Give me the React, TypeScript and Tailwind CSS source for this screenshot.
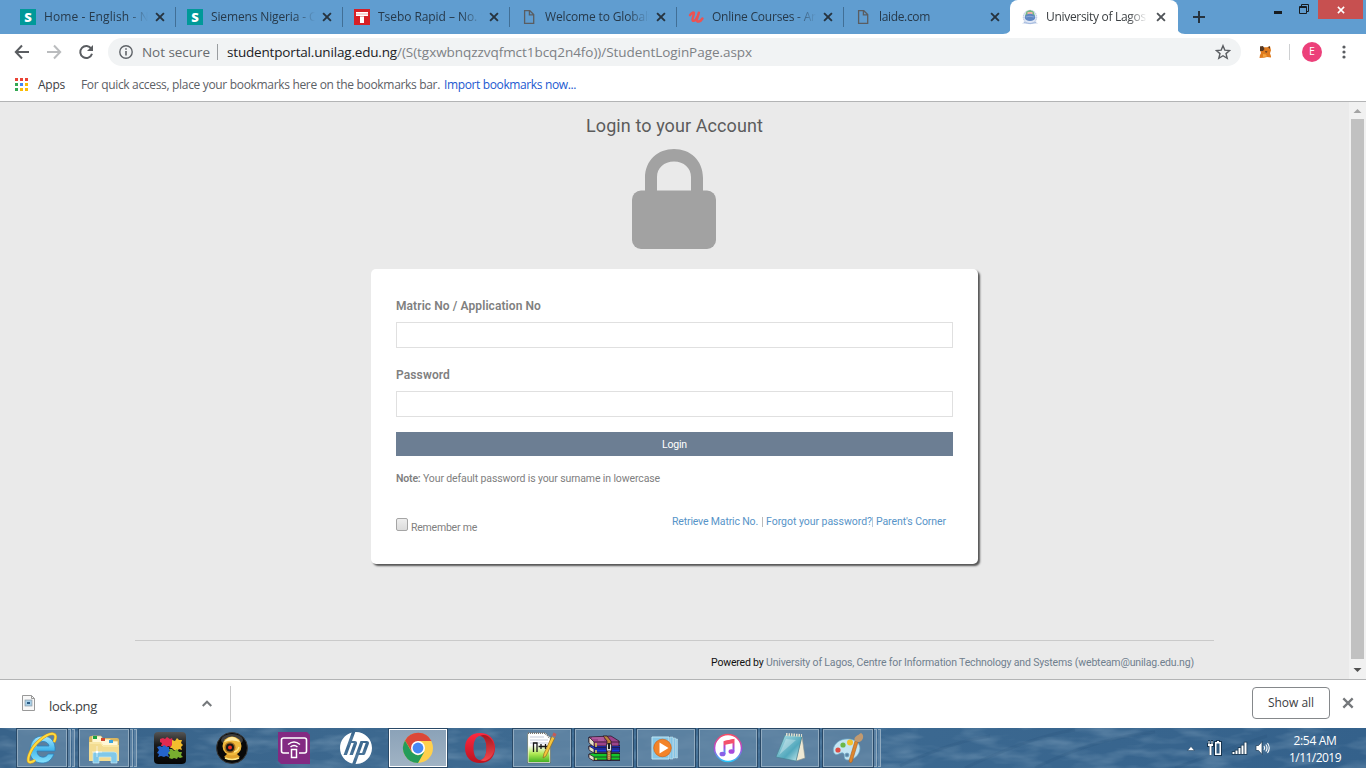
import { useLayoutEffect, useRef, useState } from "react";
import type { ReactNode } from "react";
import { SiHp } from "react-icons/si";

/* Text run whose tracking is adjusted so that it fills the given width. */
function Fit({ w, className = "", children }: { w: number; className?: string; children: string }) {
  const ref = useRef<HTMLSpanElement>(null);
  const [ls, setLs] = useState(0);
  useLayoutEffect(() => {
    if (ref.current) {
      const natural = ref.current.getBoundingClientRect().width;
      setLs((w - natural) / children.length);
    }
  }, []);
  return (
    <span ref={ref} className={`inline-block shrink-0 whitespace-pre ${className}`} style={{ letterSpacing: `${ls}px` }}>
      {children}
    </span>
  );
}

const Close = ({ className = "" }: { className?: string }) => (
  <svg viewBox="0 0 10 10" className={className} fill="none" stroke="currentColor" strokeWidth="1.9">
    <path d="M1.1 1.1 8.9 8.9M8.9 1.1 1.1 8.9" />
  </svg>
);

const Siemens = () => (
  <svg viewBox="0 0 16 16" className="h-4 w-4 overflow-visible">
    <rect width="16" height="16" fill="#009999" />
    <text x="8" y="12.7" textAnchor="middle" fontFamily="Open Sans, sans-serif" fontWeight="800" fontSize="13" fill="#fff">S</text>
  </svg>
);
const Tsebo = () => (
  <svg viewBox="0 0 16 16" className="h-4 w-4">
    <rect width="16" height="16" fill="#d71f26" />
    <path d="M2 3h12v4H10v7H6V7H2z" fill="#fff" />
    <path d="M2 5h12M6 7.5h4" stroke="#e98080" strokeWidth=".7" />
  </svg>
);
const Page = () => (
  <svg viewBox="0 0 16 16" className="h-4 w-4" fill="none" stroke="#5a5d61" strokeWidth="1.3">
    <path d="M3.6 1.7h5.200l3.900 3.800v8.800H3.600zM8.400 1.800v4h4" />
  </svg>
);
const Udemy = () => (
  <svg viewBox="0 0 16 16" className="h-4 w-4" fill="none" stroke="#ec5252" strokeLinecap="round" strokeLinejoin="round">
    <path d="M2 6.2C3.5 3.5 6.500 2.600 6 4.400L4.500 10c-.5 3 2.800 2.500 4.600-1.800" strokeWidth="2.4" />
    <path d="m10.800 3.800-2 6.700c-.3 3.500 3.700 2.200 5.600-1" strokeWidth="2.500" />
  </svg>
);
const Crest = () => (
  <svg viewBox="0 0 16 16" className="h-4 w-4">
    <path d="M4 2h8l3 6-1 4 2 3H0l2-3-1-4z" fill="#e3e9f4" />
    <circle cx="8" cy="8" r="6.700" fill="#dfe7f5" stroke="#b7c5e2" strokeWidth="1" strokeDasharray="1.5 .7" />
    <path d="M3 7 4.500 2.500 8 1l3.500 1.500L13 7z" fill="#71b980" />
    <path d="M5.500 3h5v3.500h-5z" fill="#f2b3a6" />
    <ellipse cx="8" cy="8.400" rx="5.200" ry="3.600" fill="#5f87c3" />
    <path d="M4 8q4-1.500 8 0" stroke="#8baad8" fill="none" /><path d="M2 13.500q6 2 12 0" stroke="#a4bbe0" fill="none" />
  </svg>
);

const tabs = [
  { icon: <Siemens />, title: "Home - English - Ni", w: 108 },
  { icon: <Siemens />, title: "Siemens Nigeria - Ce", w: 112 },
  { icon: <Tsebo />, title: "Tsebo Rapid – No. 1", w: 109 },
  { icon: <Page />, title: "Welcome to Globalt", w: 107 },
  { icon: <Udemy />, title: "Online Courses - Any", w: 112 },
  { icon: <Page />, title: "laide.com", w: 51 },
];

const UI = "[font-family:'Open_Sans','Noto_Sans',sans-serif]";

function TabStrip() {
  return (
    <div className="flex h-[34px] bg-[#609dd0] pl-[9px]">
      {tabs.map((t, i) => (
        <div key={t.title} className="relative flex h-[34px] w-[167px] shrink-0 items-center pl-[11px]">
          <span className="w-6">{t.icon}</span>
          <div className="h-5 w-[104px] overflow-hidden text-[12px] leading-5 text-[#26394a] [mask-image:linear-gradient(to_right,#000_80%,transparent)]">
            <Fit w={t.w}>{t.title}</Fit>
          </div>
          <Close className="ml-[7px] h-[10px] w-[10px] text-[#26333f]" />
          {i < 5 && <i className="absolute top-[7px] right-0 h-5 w-px bg-[#416f96]" />}
        </div>
      ))}
      <div className="-ml-2 flex h-[34px] shrink-0">
        <svg viewBox="0 0 8 34" className="h-[34px] w-2"><path d="M8 26q0 8-8 8h8z" fill="#fff" /></svg>
        <div className="ml-[-1px] flex h-[34px] w-[168px] items-center rounded-t-[8px] bg-white pl-3">
          <span className="w-6"><Crest /></span>
          <div className="h-5 w-[101px] overflow-hidden text-[12px] leading-5 text-[#3c4043] [mask-image:linear-gradient(to_right,#000_82%,transparent)]">
            <Fit w={109}>University of Lagos S</Fit>
          </div>
          <Close className="ml-[9px] h-[10px] w-[10px] text-[#505458]" />
        </div>
        <svg viewBox="0 0 8 34" className="-ml-px h-[34px] w-2"><path d="M0 26q0 8 8 8H0z" fill="#fff" /></svg>
      </div>
      <svg viewBox="0 0 12 12" className="mt-[11px] ml-[8px] h-3 w-3" stroke="#26333f" strokeWidth="2"><path d="M6 0v12M0 6h12" /></svg>
      <div className="ml-auto flex items-start">
        <svg viewBox="0 0 8 3" className="mt-[11px] mr-[17px] h-[3px] w-2"><path d="M0 0h8v3H0z" fill="#171c21" /></svg>
        <svg viewBox="0 0 10 10" className="mt-1 mr-[9px] h-[10px] w-[10px]" fill="none" stroke="#171c21">
          <path d="M.5 2.5h7v7h-7zM2.5 2V.5h7v7H8M1 3.500h6" />
        </svg>
        <div className="mr-[3px] flex h-[19px] w-[45px] items-center justify-center bg-[#c75050] text-white">
          <Close className="h-2 w-2" />
        </div>
      </div>
    </div>
  );
}

function Toolbar() {
  return (
    <div className="flex h-9 items-center bg-white">
      <svg viewBox="0 0 16 16" className="ml-[14px] h-4 w-4" fill="none" stroke="#5a5d61" strokeWidth="2"><path d="M15 8H2M8 1.5 1.8 8 8 14.5" /></svg>
      <svg viewBox="0 0 16 16" className="ml-4 h-4 w-4" fill="none" stroke="#babcbe" strokeWidth="2"><path d="M1 8h13M8 1.5 14.2 8 8 14.5" /></svg>
      <svg viewBox="0 0 16 16" className="ml-4 h-4 w-4"><path d="M13.3 4.8A6 6 0 1 0 14 9.8" fill="none" stroke="#5a5d61" strokeWidth="2" /><path d="M15 1v6H9z" fill="#5a5d61" /></svg>
      <div className="ml-[14px] flex h-7 w-[1133px] items-center rounded-full bg-[#f1f3f4] pl-[11px] text-[14px] leading-7">
        <svg viewBox="0 0 14 14" className="h-[14px] w-[14px]" fill="none" stroke="#5f6368" strokeWidth="1.4"><circle cx="7" cy="7" r="6.2" /><path d="M7 6v4.5M7 3.3v1.5" strokeWidth="1.6" /></svg>
        <Fit w={68} className="ml-[9px] text-[13.5px] text-[#686b6f]">Not secure</Fit>
        <i className="ml-[7px] h-4 w-px bg-[#9a9da0]" />
        <Fit w={170} className="ml-[9px] text-[13.5px] text-[#202124]">studentportal.unilag.edu.ng</Fit>
        <Fit w={355} className="text-[13.5px] text-[#7d8185]">/(S(tgxwbnqzzvqfmct1bcq2n4fo))/StudentLoginPage.aspx</Fit>
        <svg viewBox="0 0 16 16" className="mr-[10px] ml-auto h-4 w-4" fill="none" stroke="#5a5d61" strokeWidth="1.4"><path d="m8 1.7 1.8 4.4 4.9.4-3.7 3.1 1.2 4.7L8 11.7l-4.2 2.6L5 9.6 1.3 6.5l4.9-.4z" /></svg>
      </div>
      <svg viewBox="0 0 14 14" className="ml-[17px] h-[14px] w-[14px]">
        <path d="m2 1.500 4 .8h3l3-1 1 4-1 3 1 3v1.200l-4-.5-3 .7-4.500.2L2 10l1-2-1-3z" fill="#df7b1e" />
        <path d="m2 1.500 3-.5L6.500 4 5 6 2 6zM10 2l2-.8L12 4zM7 6l2.500.5L8 8z" fill="#543925" />
        <path d="m5 9 3 .5 1 2-4 .6z" fill="#f6a43c" />
      </svg>
      <i className="ml-[17px] h-4 w-px bg-[#ced0d2]" />
      <span className="ml-[12px] flex h-5 w-5 items-center justify-center rounded-full bg-[#ec407a] text-[10.5px] text-white">E</span>
      <svg viewBox="0 0 4 16" className="ml-[20px] h-4 w-1" fill="#5a5d61"><circle cx="2" cy="3" r="1.6" /><circle cx="2" cy="8" r="1.6" /><circle cx="2" cy="13" r="1.6" /></svg>
    </div>
  );
}

const dots = ["#ea4335", "#ea4335", "#ea4335", "#34a853", "#4285f4", "#fbbc05", "#34a853", "#fbbc05", "#fbbc05"];

function BookmarksBar() {
  return (
    <div className="flex h-[32px] items-center border-b border-[#b3b4b5] bg-white pb-[3px] text-[12px] leading-5 text-[#3c4043]">
      <svg viewBox="0 0 13 13" className="ml-[15px] h-[13px] w-[13px]">
        {dots.map((c, i) => <rect key={i} x={(i % 3) * 5} y={Math.floor(i / 3) * 5} width="3" height="3" fill={c} />)}
      </svg>
      <Fit w={27} className="mt-px ml-[10px]">Apps</Fit>
      <Fit w={359} className="mt-px ml-[16px] text-[#5c6065]">For quick access, place your bookmarks here on the bookmarks bar.</Fit>
      <Fit w={132} className="mt-px ml-[4px] text-[#2259d0]">Import bookmarks now...</Fit>
    </div>
  );
}

function LoginPage() {
  return (
    <div className="flex h-[577px] bg-[#eaeaea] [font-family:Roboto,'Open_Sans',sans-serif]">
      <div className="flex w-[1349px] flex-col items-center">
        <Fit w={177} className="mt-[12px] text-[18px] leading-6 text-[#5c5c5c]">Login to your Account</Fit>
        <svg viewBox="0 0 84 100" className="mt-[11px] mr-[1px] h-[100px] w-[84px]" fill="#a2a2a2">
          <path fillRule="evenodd" d="M13 44V29C13 11 26 0 42 0s29 11 29 29v15zM25 42h34V28c0-9-7-15.500-17-15.500S25 19 25 28z" />
          <rect y="41.500" width="84" height="58.500" rx="9" />
        </svg>
        <div className="mt-5 flex h-[295px] w-[607px] flex-col rounded-[5px] bg-white px-[25px] text-[10.500px] text-[#808080] shadow-[2px_2px_2px_#555]">
          <label className="mt-[28px] h-[19px] text-[12px] leading-[19px] font-semibold"><Fit w={145}>Matric No / Application No</Fit></label>
          <input className="mt-[6px] h-[26px] w-[557px] border border-[#e0e0e0] bg-white" />
          <label className="mt-[18px] h-[19px] text-[12px] leading-[19px] font-semibold"><Fit w={54}>Password</Fit></label>
          <input type="password" className="mt-[6px] h-[26px] w-[557px] border border-[#e0e0e0] bg-white" />
          <button className="mt-[15px] h-6 w-[557px] bg-[#6c7e93] pt-px leading-[23px] text-white"><Fit w={25}>Login</Fit></button>
          <div className="mt-[14px] flex h-[17px] leading-[17px]">
            <Fit w={27} className="font-semibold">Note: </Fit>
            <Fit w={237}>Your default password is your surname in lowercase</Fit>
          </div>
          <div className="mt-[26px] flex h-[24px] leading-[17px]">
            <span className="mt-[5px] h-[13px] w-[12px] rounded-[2px] border border-[#a5a5a5] bg-linear-to-b from-[#eee] to-[#dcdcdc]" />
            <Fit w={66} className="mt-[6px] ml-[3px]">Remember me</Fit>
            <div className="mr-[7px] ml-auto flex text-[#5794c8]">
              <Fit w={86}>Retrieve Matric No.</Fit>
              <i className="mr-[2px] ml-[4px] mt-[4px] h-[10px] w-px bg-[#bbb]" />
              <Fit w={106} className="ml-px">Forgot your password?</Fit>
              <i className="mt-[4px] mr-[3px] h-[10px] w-px bg-[#b9c9da]" />
              <Fit w={70}>Parent's Corner</Fit>
            </div>
          </div>
        </div>
        <div className="mt-[76px] flex h-[31px] w-[1079px] items-end justify-end border-t border-[#cacaca] pr-[20px] text-[10.500px] leading-[17px] text-[#70808e]">
          <Fit w={55} className="text-[#111]">Powered by </Fit>
          <Fit w={428}>University of Lagos, Centre for Information Technology and Systems (webteam@unilag.edu.ng)</Fit>
        </div>
      </div>
      <div className="flex w-[17px] flex-col items-center bg-[#f1f1f1]">
        <svg viewBox="0 0 17 17" className="h-[17px] w-[17px]"><path d="m8.500 7 4 4h-8z" fill="#a3a3a3" /></svg>
        <div className="h-[540px] w-[13px] bg-[#c1c1c1]" />
        <svg viewBox="0 0 17 17" className="mt-[2px] h-[17px] w-[17px]"><path d="m8.500 11 4-4h-8z" fill="#505050" /></svg>
      </div>
    </div>
  );
}

function Downloads() {
  return (
    <div className="flex h-[49px] items-center border-t border-[#b3b4b5] bg-white">
      <svg viewBox="0 0 13 16" className="mb-[3px] ml-[22px] h-4 w-[13px]">
        <path d="M.5.5h9l3 3v12H.5z" fill="#f8f8f8" stroke="#999" /><path d="M9.500.5v3h3" fill="none" stroke="#999" />
        <rect x="3" y="5" width="7" height="6" fill="#a7cfe8" stroke="#8c99a4" strokeWidth=".7" /><rect x="5" y="7" width="3" height="2" fill="#2d5b84" />
      </svg>
      <Fit w={48} className="mt-[5px] ml-[14px] text-[13px] text-[#3c4043]">lock.png</Fit>
      <svg viewBox="0 0 10 7" className="mb-px ml-[105px] h-[7px] w-[10px]" fill="none" stroke="#75787b" strokeWidth="2"><path d="m.7 6 4.300-4.300L9.300 6" /></svg>
      <i className="ml-[18px] h-9 w-px bg-[#c8c8c8]" />
      <button className="mr-[12px] mb-[2px] ml-auto h-8 w-[78px] rounded-[4px] border border-[#85888b] pb-px text-[12px] font-medium text-[#3c4043]"><Fit w={46}>Show all</Fit></button>
      <Close className="mr-[12px] mb-[2px] h-[12px] w-[12px] text-[#75787b]" />
    </div>
  );
}

const Ie = () => (
  <svg viewBox="0 0 32 32" className="h-8 w-8">
    <defs><linearGradient id="ie" x2="0" y2="1"><stop stopColor="#a9e9ff" /><stop offset=".5" stopColor="#45b8ed" /><stop offset="1" stopColor="#86e1fc" /></linearGradient></defs>
    <path fillRule="evenodd" d="M17 4c8 0 13 6 12 15H11c0 7 9 8 11 3h6c-3 7-7 9-12 9-8 0-13-6-12-14S9 4 17 4zm-6 10h12c-1-6-11-6-12 0z" fill="url(#ie)" stroke="#2982bd" strokeWidth=".8" />
    <path d="M28 10C33 0 25-1 14 8S-1 32 5 30c1 0 3-1 4-2" fill="none" stroke="#d79a1c" strokeWidth="3" />
    <path d="M28 10C33 0 25-1 14 8S-1 32 5 30c1 0 3-1 4-2" fill="none" stroke="#ffdc3f" strokeWidth="1.900" />
  </svg>
);
const Folder = () => (
  <svg viewBox="0 0 32 32" className="h-8 w-8">
    <path d="M1 6q0-2 2-2h8l2 2h16q2 0 2 2v21H1z" fill="#d9b660" />
    <path d="M4 4h9l2 3h7l2 2h6v17H4z" fill="#fff7d5" stroke="#d9bd71" strokeWidth=".7" />
    <path d="M5 4h4v3H5z" fill="#1ca342" /><path d="M13 6h4v3h-4z" fill="#cf482f" /><path d="M21 8h4v3h-4z" fill="#39a4e0" />
    <path d="M1 10h12l2 3h16v16H1z" fill="#f3dc91" /><path d="M2 11h11l2 3h15" fill="none" stroke="#fff2bb" />
    <path d="M5 31V22q0-2 2-2h19q3 0 3 3v8h-6v-6H11v6z" fill="#80c8e9" stroke="#c3e8f7" strokeWidth=".7" />
    <path d="M9 14v11M4 20h10" stroke="#fff" strokeWidth=".6" /><circle cx="9" cy="20" r="1.300" fill="#fff" />
  </svg>
);
const Puzzle = () => (
  <svg viewBox="0 0 32 32" className="h-8 w-8">
    <defs><linearGradient id="pz" x2="0" y2="1"><stop stopColor="#555" /><stop offset=".4" stopColor="#1a1a1a" /><stop offset="1" stopColor="#050505" /></linearGradient></defs>
    <rect width="32" height="32" rx="4" fill="url(#pz)" />
    <path d="m6 7 3-1 2 1 2-2 3 2 2-1 1 3-1 2 2 2-3 2-3-1-2 2-2-2-3 0 1-3-2-1z" fill="#e22a50" />
    <path d="m18 8 3 1 2-3 2 2 3 0-1 3 2 2-2 2 1 3-3-1-2 2-3-1-2-2-2 0 2-3z" fill="#f3bd2d" />
    <path d="m3 15 3-1 2 1 2-2 3 2 2 0 0 3 2 2-3 2 1 3-3-1-2 1-3-1-3 1 1-3-2-1 2-3z" fill="#2464cb" />
    <path d="m15 17 3 0 2 2 3-2 2 3 3 0-1 3 2 2-3 1-2-1-1 2-3-1-2 1-3-1 1-3-2-2 2-2z" fill="#78ad2f" />
  </svg>
);
const Webcam = () => (
  <svg viewBox="0 0 32 32" className="h-8 w-8">
    <circle cx="16" cy="16" r="15.500" fill="#090909" stroke="#383838" /><ellipse cx="16" cy="8" rx="11" ry="6" fill="#606060" opacity=".6" />
    <path d="m12 21-4 4q8 5 16 0l-4-4z" fill="#dfa12b" />
    <circle cx="16" cy="14" r="9.500" fill="#efb83c" /><path d="M8 10q8-10 16 0-8-3-16 0z" fill="#ffeaa2" />
    <circle cx="14" cy="15.500" r="5.500" fill="#a46e20" /><circle cx="14" cy="15.500" r="4" fill="#171717" /><circle cx="14" cy="15.500" r="2" fill="#f22e1e" /><path d="M18 20q4-1 5-5M9 26q7 3 14 0" stroke="#ffe581" fill="none" strokeWidth="1.500" />
  </svg>
);
const Cast = () => (
  <svg viewBox="0 0 32 32" className="h-8 w-8" fill="none" stroke="#fff">
    <path d="M0 0h29l3 3v29H3l-3-3z" fill="#832a82" stroke="none" />
    <path d="M11 21H5.500q-2 0-2-2V8q0-2 2-2h21q2 0 2 2v11q0 2-2 2H21" strokeWidth="1.600" />
    <path d="M13.500 17.500h5v8h-5z" strokeWidth="1.500" /><path d="M10 12.500q6-5 12 0M12.500 15q3.500-3 7 0" strokeWidth="1.500" />
  </svg>
);
const Chrome = () => (
  <svg viewBox="0 0 32 32" className="h-8 w-8">
    <circle cx="16" cy="16" r="15" fill="#ffd04d" />
    <path d="M3 8.500A15 15 0 0 1 29.500 9H16L10 20z" fill="#db4839" />
    <path d="M3 8.500 9.700 20 16 23.500 22.500 19.500 16 31A15 15 0 0 1 3 8.500z" fill="#249c5a" />
    <circle cx="16" cy="16" r="7" fill="#fff" /><circle cx="16" cy="16" r="5.400" fill="#4688f4" />
  </svg>
);
const Opera = () => (
  <svg viewBox="0 0 32 32" className="h-8 w-8">
    <defs>
      <linearGradient id="op" x2="0" y2="1"><stop stopColor="#ff2840" /><stop offset="1" stopColor="#bb1420" /></linearGradient>
      <linearGradient id="op2" x2="0" y2="1"><stop stopColor="#a51921" /><stop offset="1" stopColor="#f5474d" /></linearGradient>
    </defs>
    <path fillRule="evenodd" d="M16 1C7 1 1 7 1 16s6 15 15 15 15-6 15-15S25 1 16 1zm0 3c4 0 6.500 5 6.500 12S20 28 16 28s-6.500-5-6.500-12S12 4 16 4z" fill="url(#op)" />
    <path d="M16 4c4-2 8-.5 11 3 5 6 4 14 0 18-3 3.500-7 5-11 3 4 0 6.500-5 6.500-12S20 4 16 4z" fill="url(#op2)" />
  </svg>
);
const Npp = () => (
  <svg viewBox="0 0 32 32" className="h-8 w-8">
    <defs><linearGradient id="np" x2="0" y2="1"><stop offset=".4" stopColor="#fff" /><stop offset=".7" stopColor="#b0e952" /><stop offset="1" stopColor="#3fae20" /></linearGradient></defs>
    <path d="M2 1.500h17l5 4v25H2z" fill="url(#np)" stroke="#f5f7ef" /><path d="M1.500 1.500v29.500h23v-25" stroke="#5b6659" strokeWidth=".6" fill="none" />
    <path d="M2 1h17l5 5" stroke="#777" strokeWidth="1.800" strokeDasharray="1 1" fill="none" /><path d="M4 5h14M4 8h18M4 11h18" stroke="#b6bfd1" strokeWidth=".8" />
    <path d="M7.500 20v-9h3.500v9M12.500 14.500h5M15 12v5M17.500 14.500h4M19.500 12v5" fill="none" stroke="#171717" strokeWidth="1.300" />
    <path d="m17 26 1-4.500L26 4l3 1.500L20 24z" fill="#f4c53d" stroke="#946a21" strokeWidth=".7" /><path d="m26 4 1.500-3.500 3 1.500L29 5.500z" fill="#c55a56" /><path d="m26 4 3 1.500" stroke="#7b8094" strokeWidth="1.500" />
  </svg>
);
const Winrar = () => (
  <svg viewBox="0 0 32 32" className="h-8 w-8" stroke="#201020" strokeWidth=".7">
    <path d="m1 22 4-1h26l1 1v6H5l-4-3z" fill="#15c72a" /><path d="m1 22 5 3v4l-5-3z" fill="#e7e1cb" />
    <path d="m1 14 4-1h26l1 1v6H6l-5-3z" fill="#1838df" /><path d="m1 14 5 3v4l-5-3z" fill="#e7e1cb" />
    <path d="m1 5 22-1 8 5v5H6l-5-4z" fill="#9c438b" /><path d="m1 5 5 5v5l-5-4z" fill="#e7e1cb" />
    <path d="M6 10h26M6 17h26M6 25h26M6 15.500h26M6 21.500h26M6 28.500h26" stroke="#241122" />
    <path d="M8 11v4M8 18v3M8 26v2" stroke="#e2c950" strokeWidth="1.500" />
    <path d="m15 4 4 5v19h4V9l-4-5z" fill="#bd853e" /><path d="M18.500 12h5v7h-5z" fill="#ddd" /><path d="M21 11v6" stroke="#222" strokeWidth="2" /><path d="M21 19v9" stroke="#ecd79b" strokeDasharray="1 1" />
    <path d="m4 6 12 0M10 8h6" stroke="#d38bbd" />
  </svg>
);
const Wmp = () => (
  <svg viewBox="0 0 32 32" className="h-8 w-8">
    <path d="M2 5h17v22H2z" fill="#87c7e7" stroke="#bfe6f5" /><path d="M20 5h3v22h-3zM23.500 6h2v20h-2zM26 7h1.500v19H26z" fill="#84c3e4" stroke="#d0edf6" strokeWidth=".5" />
    <circle cx="12.500" cy="16" r="8.800" fill="#f38328" stroke="#d06316" strokeWidth=".7" /><path d="m9.500 10.500 9 5.500-9 5.500z" fill="#fff" />
  </svg>
);
const Itunes = () => (
  <svg viewBox="0 0 32 32" className="h-8 w-8">
    <defs><linearGradient id="it" x2="0" y2="1"><stop stopColor="#fa4c64" /><stop offset=".55" stopColor="#a84adb" /><stop offset="1" stopColor="#28c8fb" /></linearGradient></defs>
    <circle cx="16" cy="16" r="13.500" fill="#fff" stroke="url(#it)" strokeWidth="1.600" />
    <path d="M12.500 22V10l9-2v11" fill="none" stroke="url(#it)" strokeWidth="2" /><path d="m12 9 10-2v4l-10 2z" fill="#f4516b" /><ellipse cx="10.500" cy="22" rx="3" ry="2.300" fill="#8961e8" /><ellipse cx="19.500" cy="19.500" rx="3" ry="2.300" fill="#a84adb" />
  </svg>
);
const Notepad = () => (
  <svg viewBox="0 0 32 32" className="h-8 w-8">
    <defs><linearGradient id="nt" x2="1" y2="1"><stop stopColor="#b9e5ea" /><stop offset=".6" stopColor="#52a8bd" /><stop offset="1" stopColor="#d8f4f4" /></linearGradient></defs>
    <path d="m28 4 3 22-9 3z" fill="#eee9d4" stroke="#8b9491" strokeWidth=".6" /><path d="m11 3 17 1-6 25-20-4z" fill="url(#nt)" stroke="#44808f" strokeWidth=".6" />
    <path d="m12 2.500 16 1" stroke="#e1dfcf" strokeWidth="3" strokeDasharray="1.500 1" /><path d="M12 7 5 23 22 8z" fill="#fff" opacity=".3" />
  </svg>
);
const Paint = () => (
  <svg viewBox="0 0 32 32" className="h-8 w-8">
    <path fillRule="evenodd" d="M17 7C6 6-1 15 2 21c3 4 6-1 9 0s-1 7 5 7c12 0 19-19 1-21zM15 21a2 2 0 1 1 0 4 2 2 0 0 1 0-4z" fill="#c3e5f3" stroke="#6eabc9" strokeWidth=".7" />
    <circle cx="6" cy="18" r="2.600" fill="#dc4e45" /><circle cx="11" cy="13" r="2.600" fill="#6cb847" /><circle cx="18" cy="10.500" r="3" fill="#f1c12f" />
    <path d="m17 29 6-20 3 1-6 20q-2 2-3-1z" fill="#dd862d" stroke="#a96020" strokeWidth=".6" /><path d="M23 9c-2-4 2-5 6-8 4 2 2 9-3 9z" fill="#c29a70" />
  </svg>
);

const tasks: { icon: ReactNode; kind: "plain" | "open" | "stack" | "active" }[] = [
  { icon: <Ie />, kind: "stack" },
  { icon: <Folder />, kind: "stack" },
  { icon: <Puzzle />, kind: "plain" },
  { icon: <Webcam />, kind: "plain" },
  { icon: <Cast />, kind: "plain" },
  { icon: <SiHp className="h-8 w-8 text-white" />, kind: "plain" },
  { icon: <Chrome />, kind: "active" },
  { icon: <Opera />, kind: "plain" },
  { icon: <Npp />, kind: "open" },
  { icon: <Winrar />, kind: "open" },
  { icon: <Wmp />, kind: "open" },
  { icon: <Itunes />, kind: "open" },
  { icon: <Notepad />, kind: "open" },
  { icon: <Paint />, kind: "stack" },
];

const frame = {
  plain: "w-[58px] border-transparent",
  open: "w-[58px] border-[#91abc0] bg-[#6688a5]/75 outline outline-[#294967]",
  stack: "w-[50px] border-[#91abc0] bg-[#6688a5]/75 outline outline-[#294967]",
  active: "w-[58px] border-white bg-linear-to-b from-[#8ba2b8] to-[#a0b3c4] outline outline-[#294967]",
};

function Taskbar() {
  return (
    <div className="relative flex h-10 bg-linear-to-r from-[#38638a] via-[#3f6c93] to-[#34618b] pl-[17px]">
      <svg viewBox="0 0 1366 40" className="absolute inset-0 h-10 w-full">
        <filter id="water" x="0" y="0" width="100%" height="100%">
          <feTurbulence type="fractalNoise" baseFrequency=".025 .09" numOctaves="3" seed="7" />
          <feColorMatrix values="0 0 0 0 .65  0 0 0 0 .8  0 0 0 0 .9  0 0 0 1.500 -.62" />
        </filter>
        <rect width="1366" height="40" filter="url(#water)" opacity=".3" />
        <path d="M900 38q50-24 90-30m-25 32q70-33 110-38m-40 38q60-30 120-36m20 36q50-18 92-32" fill="none" stroke="#173e62" strokeWidth="3" opacity=".1" />
      </svg>
      {tasks.map((t, i) => (
        <div key={i} className="relative flex h-10 w-[62px] shrink-0 pt-px">
          <div className={`flex h-[38px] items-center justify-center border ${frame[t.kind]}`}>{t.icon}</div>
          {t.kind === "stack" && (
            <>
              <i className="ml-[1px] h-[38px] w-[3px] border-y border-r border-[#91abc0] bg-[#668aaa]/75" />
              <i className="ml-[1px] h-[38px] w-[3px] border-y border-r border-[#91abc0] bg-[#668aaa]/75" />
            </>
          )}
        </div>
      ))}
      <div className="relative ml-auto flex items-center text-white">
        <svg viewBox="0 0 8 5" className="mt-px mr-[12px] h-[5px] w-2 overflow-visible"><path d="m4 .5 3.500 4h-7z" fill="#fff" stroke="#17344e" strokeWidth=".5" /></svg>
        <svg viewBox="0 0 16 16" className="h-4 w-4 overflow-visible">
          <path d="M0 3h1V0h2v3h1V0h2v3h1v4H5v8H2V7H0zM7 1h2V0h4v1h2v15H7z" fill="#17344e" />
          <path d="M1 4h5v2H4.500v9h-2V6H1zM1.500 1h1v3h-1zM4.500 1h1v3h-1zM10 1h2v1h-2zM8 2h6v13H8z" fill="#fff" />
          <path d="M9.500 3.500h3v10h-3z" fill="#315b80" />
        </svg>
        <svg viewBox="0 0 16 14" className="ml-[9px] h-[14px] w-4 overflow-visible" fill="#fff" stroke="#17344e" strokeWidth="1.500"><path paintOrder="stroke" d="M.5 11h2v2h-2zM3.500 9.500h2V13h-2zM6.500 7h2v6h-2zM9.500 4.500h2V13h-2zM12.500 1.500h2V13h-2z" /></svg>
        <svg viewBox="0 0 16 16" className="ml-[7px] h-4 w-4 overflow-visible" fill="none" stroke="#fff" strokeWidth="1.100"><path d="M1 5.500h2.500l3.500-4v13l-3.500-4H1z" fill="#fff" stroke="#17344e" strokeWidth=".7" /><path d="M9 6q1.500 2 0 4M10.800 4.500q2.500 3.500 0 7M12.500 3q3.500 5 0 10" /></svg>
        <div className="mr-[24px] ml-[17px] flex w-[54px] flex-col items-center text-[12px] leading-[17px]">
          <Fit w={43} className="mt-px">2:54 AM</Fit>
          <Fit w={52}>1/11/2019</Fit>
        </div>
      </div>
    </div>
  );
}

export default function App() {
  return (
    <div className={`flex h-[768px] w-[1366px] flex-col overflow-hidden ${UI}`}>
      <TabStrip />
      <Toolbar />
      <BookmarksBar />
      <LoginPage />
      <Downloads />
      <Taskbar />
    </div>
  );
}
